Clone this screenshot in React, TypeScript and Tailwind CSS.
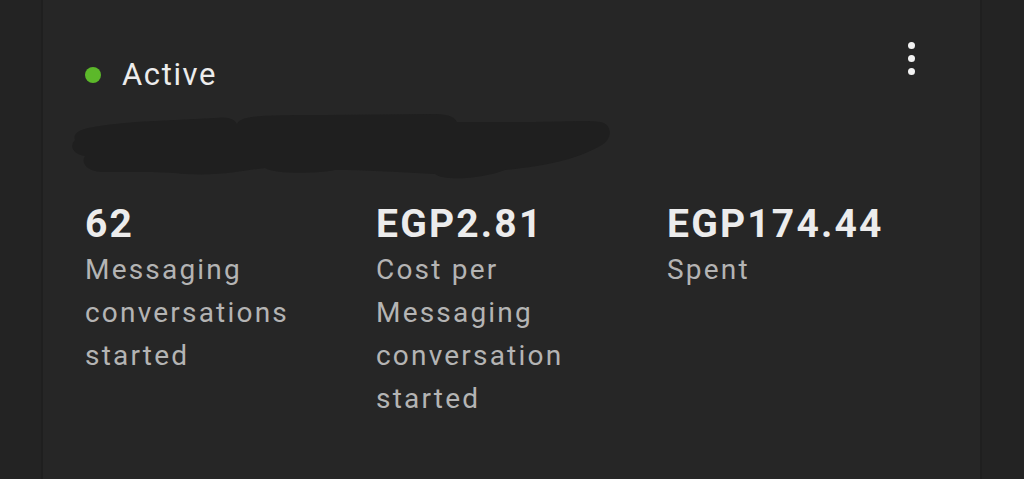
const stats = [
  { value: '62', label: ['Messaging', 'conversations', 'started'] },
  { value: 'EGP2.81', label: ['Cost per', 'Messaging', 'conversation', 'started'] },
  { value: 'EGP174.44', label: ['Spent'] },
];

function Redaction() {
  return (
    <svg width="548" height="72" viewBox="0 0 548 72" className="block">
      <path
        d="M10 28 C 6 16, 30 14, 70 10 L 150 6 C 165 4, 170 8, 172 12 C 176 4, 190 3, 260 3 L 370 2 C 385 2, 390 6, 392 10 L 470 10 C 500 10, 520 8, 535 10 C 548 12, 548 28, 535 34 C 510 48, 480 54, 440 58 C 420 66, 380 70, 370 62 C 330 60, 300 58, 270 58 C 250 62, 210 62, 200 56 C 180 58, 160 64, 120 62 C 100 60, 80 60, 40 60 C 20 60, 16 50, 20 44 C 8 42, 4 34, 10 28 Z"
        fill="#1f1f1f"
      />
    </svg>
  );
}

export default function App() {
  return (
    <div className="w-[1024px] h-[479px] bg-[#232323] flex font-['Roboto',sans-serif] overflow-hidden">
      <div className="w-[41px] shrink-0" />
      <div className="w-[941px] h-full bg-[#262626] border-x-2 border-[#1f1f1f] relative">
        <button className="absolute left-[865px] top-[42px] flex flex-col gap-[6px] items-center">
          <span className="w-[7px] h-[7px] rounded-full bg-[#f2f2f2]" />
          <span className="w-[7px] h-[7px] rounded-full bg-[#f2f2f2]" />
          <span className="w-[7px] h-[7px] rounded-full bg-[#f2f2f2]" />
        </button>

        <div className="pl-[42px] pt-[56px] flex items-center gap-[21px]">
          <span className="w-[16px] h-[16px] rounded-full bg-[#5cb82a]" />
          <span className="text-[31px] leading-[38px] tracking-[1.6px] text-[#ececec]">Active</span>
        </div>

        <div className="pl-[22px] pt-[18px]">
          <Redaction />
        </div>

        <div className="pl-[42px] pt-[16px] flex">
          {stats.map((s) => (
            <div key={s.value} className="w-[291px] shrink-0">
              <div className="text-[39px] leading-[48px] font-bold tracking-[2.2px] text-[#ececec]">
                {s.value}
              </div>
              <div className="text-[28px] leading-[43px] tracking-[2.2px] text-[#b4b4b4]">
                {s.label.map((l) => (
                  <div key={l}>{l}</div>
                ))}
              </div>
            </div>
          ))}
        </div>
      </div>
    </div>
  );
}
